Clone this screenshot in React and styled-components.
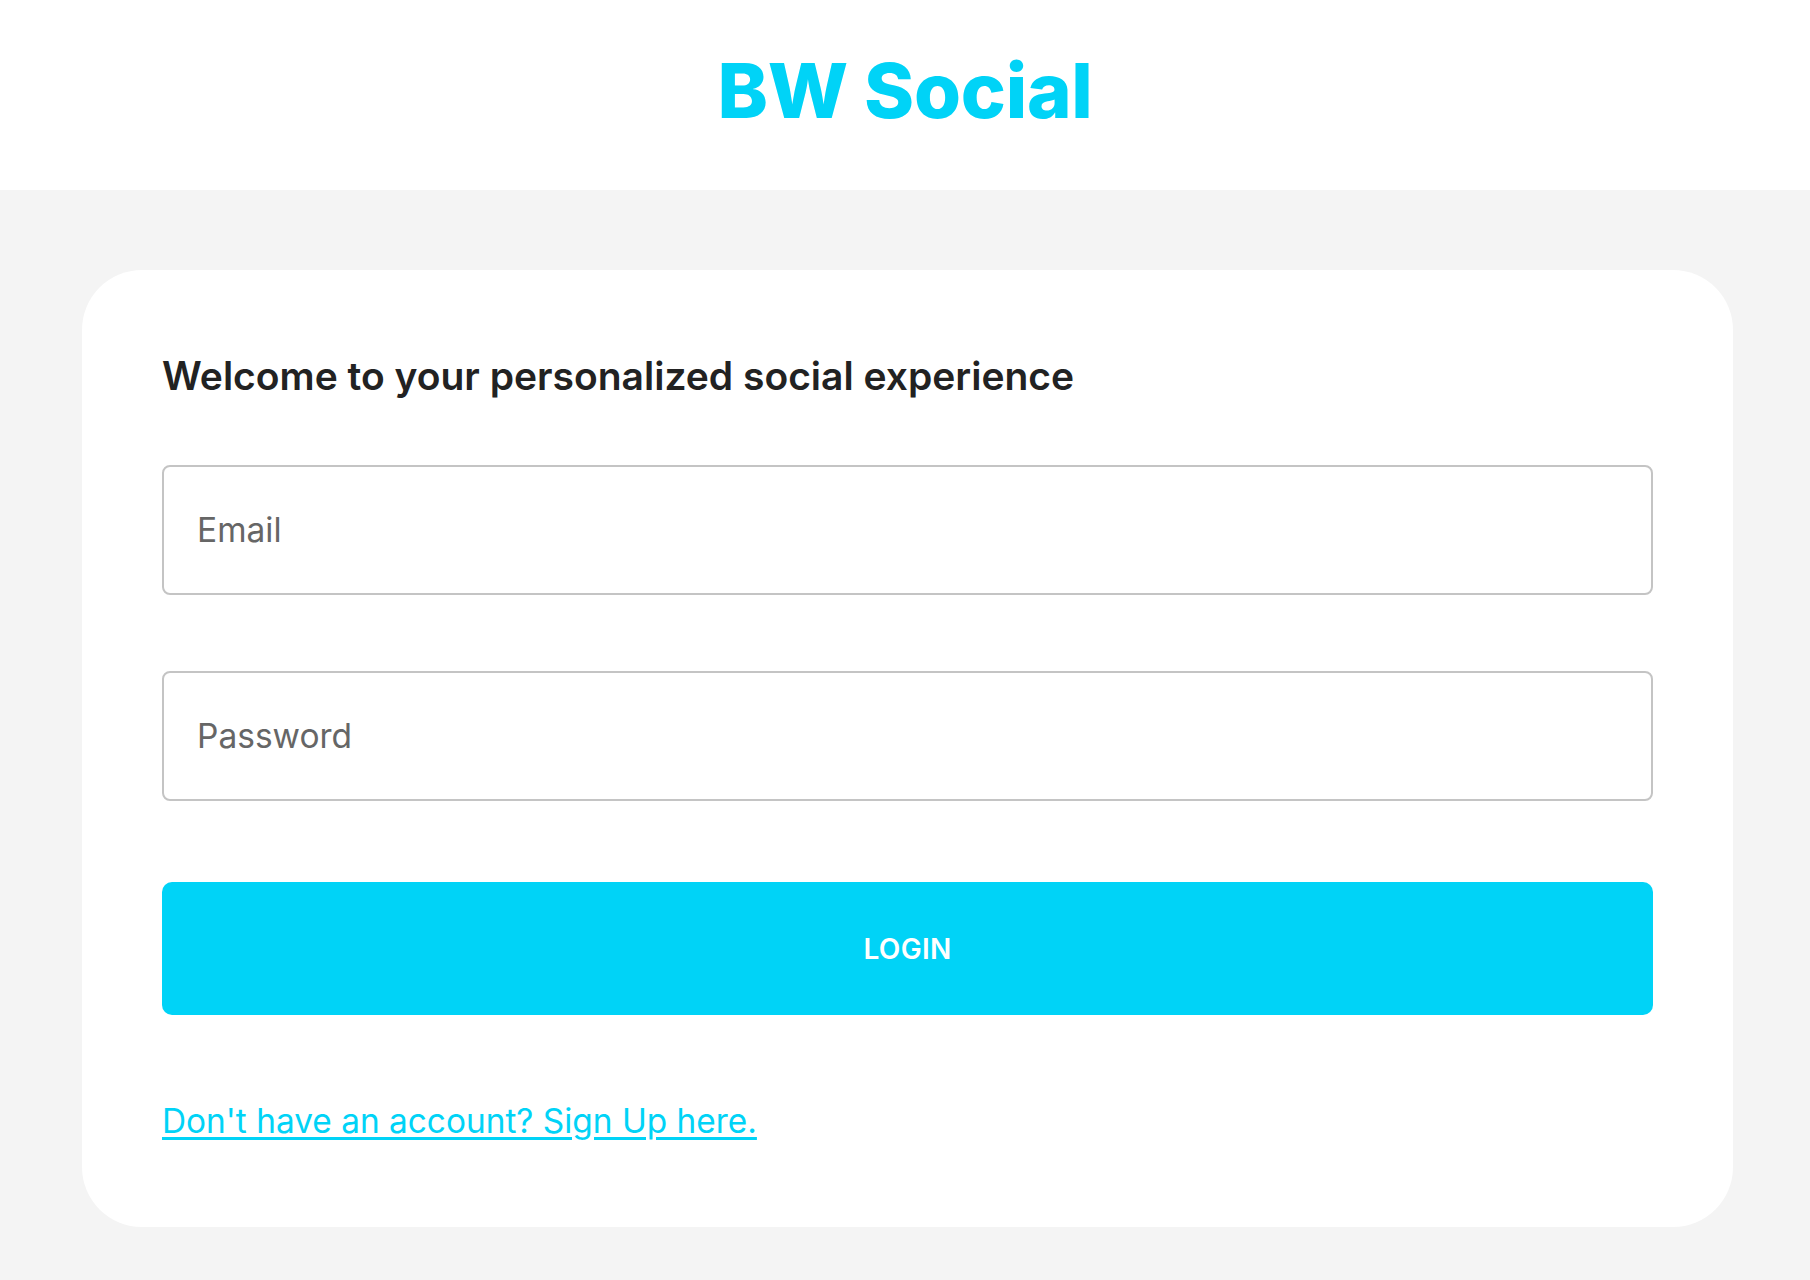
import React from 'react'
import styled, { createGlobalStyle } from 'styled-components'

const GlobalStyle = createGlobalStyle`
  html, body {
    margin: 0;
    padding: 0;
    background: #f4f4f4;
    font-family: Inter, "Noto Sans", sans-serif;
  }
`

const Header = styled.header`
  box-sizing: border-box;
  height: 190px;
  padding-bottom: 11px;
  background: #fff;
  display: flex;
  align-items: center;
  justify-content: center;

  h1 {
    margin: 0;
    font-size: 76px;
    font-weight: 800;
    color: #00d3f7;
    letter-spacing: -0.3px;
  }
`

const Page = styled.main`
  padding: 80px 77px 60px 82px;
`

const Card = styled.section`
  background: #fff;
  border-radius: 60px;
  padding: 82px 80px 86px;

  h2 {
    margin: 0 0 65px;
    font-size: 39px;
    font-weight: 600;
    color: #222;
    line-height: 48px;
  }
`

const Input = styled.input`
  display: block;
  box-sizing: border-box;
  width: 100%;
  height: 130px;
  margin-bottom: ${(p) => p.gap || 0}px;
  padding: 0 33px;
  border: 2px solid #c4c4c4;
  border-radius: 8px;
  font-family: inherit;
  font-size: 33.5px;
  color: #333;
  outline: none;

  &::placeholder {
    color: #666;
  }
`

const Button = styled.button`
  display: block;
  width: 100%;
  height: 133px;
  border: none;
  border-radius: 10px;
  background: #00d3f7;
  color: #fff;
  font-family: inherit;
  font-size: 28px;
  font-weight: 600;
  letter-spacing: 0.3px;
  cursor: pointer;
`

const SignUp = styled.a`
  display: inline-block;
  margin-top: 86px;
  font-size: 33.4px;
  line-height: 40px;
  color: #00d3f7;
  text-decoration: underline;
  text-underline-offset: 4px;
`

function App() {
  return (
    <>
      <GlobalStyle />
      <Header>
        <h1>BW Social</h1>
      </Header>
      <Page>
        <Card>
          <h2>Welcome to your personalized social experience</h2>
          <form onSubmit={(e) => e.preventDefault()}>
            <Input type="email" placeholder="Email" gap={76} />
            <Input type="password" placeholder="Password" gap={81} />
            <Button type="submit">LOGIN</Button>
          </form>
          <SignUp href="#">Don't have an account? Sign Up here.</SignUp>
        </Card>
      </Page>
    </>
  )
}

export default App
